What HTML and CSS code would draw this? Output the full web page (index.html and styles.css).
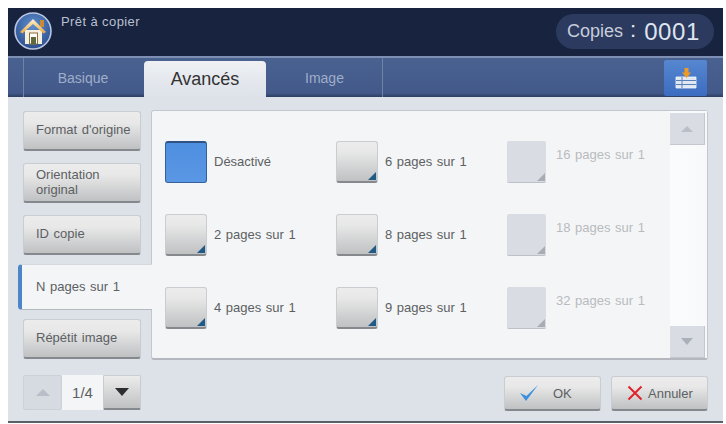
FILE: index.html
```html
<!DOCTYPE html>
<html lang="fr">
<head>
<meta charset="utf-8">
<title>Prêt à copier</title>
<link rel="stylesheet" href="styles.css">
</head>
<body>
<div class="frame">
  <header class="top">
    <div class="home">
      <svg viewBox="0 0 38 38" width="38" height="38">
        <defs>
          <radialGradient id="hb" cx="50%" cy="35%" r="65%"><stop offset="0" stop-color="#5f8fd0"/><stop offset="1" stop-color="#2c4f8f"/></radialGradient>
          <linearGradient id="roof" x1="0" y1="0" x2="0" y2="1"><stop offset="0" stop-color="#fff3cf"/><stop offset="1" stop-color="#e9a743"/></linearGradient>
        </defs>
        <circle cx="19" cy="19" r="18" fill="url(#hb)" stroke="#b9c6e2" stroke-width="1.6"/>
        <rect x="26" y="8" width="4" height="7" fill="#c98a35"/>
        <path d="M11 18h17v14H11z" fill="#f5efdf"/>
        <path d="M6 20 19 7l13 13-2.500 1.500L19 12 8.500 21.500z" fill="url(#roof)"/>
        <rect x="15.500" y="21" width="8" height="11" fill="#fff" stroke="#8a6f3c" stroke-width="1"/>
        <rect x="17" y="25" width="5" height="7" fill="#5f6b3d"/>
      </svg>
    </div>
    <div class="status">Prêt à copier</div>
    <div class="copies"><span class="copies-label">Copies</span><span class="copies-sep">:</span><span class="copies-val">0001</span></div>
  </header>

  <nav class="tabs">
    <div class="tab tab-first">Basique</div>
    <div class="tab tab-active">Avancés</div>
    <div class="tab tab-third">Image</div>
    <div class="tab-rest">
      <button class="tab-icon" aria-label="Options">
        <svg viewBox="0 0 24 26" width="24" height="26">
          <path d="M2 12h20v11H2z" fill="#dfe7f3" stroke="#f4f7fb" stroke-width=".8"/>
          <path d="M2 15.500h20M2 19.500h20M8 12v11" stroke="#5a80b8" stroke-width="1"/>
          <path d="M8 7.500h2.500V3h4v4.500H17L12.500 13z" fill="#ee9a24"/>
        </svg>
      </button>
    </div>
  </nav>

  <main class="body">
    <aside class="side">
      <button class="side-btn">Format d'origine</button>
      <button class="side-btn side-two">Orientation<br>original</button>
      <button class="side-btn">ID copie</button>
      <div class="side-btn side-active">N pages sur 1</div>
      <button class="side-btn">Répétit image</button>
      <div class="pager">
        <span class="pg pg-off"><i class="tri-up"></i></span>
        <span class="pg-num">1/4</span>
        <span class="pg pg-on"><i class="tri-down"></i></span>
      </div>
    </aside>

    <section class="main">
      <div class="panel">
        <div class="grid">
          <div class="opt"><span class="sq sq-sel"></span><span class="lbl">Désactivé</span></div>
          <div class="opt"><span class="sq"></span><span class="lbl">6 pages sur 1</span></div>
          <div class="opt opt-off"><span class="sq sq-off"></span><span class="lbl lbl-off">16 pages sur 1</span></div>
          <div class="opt"><span class="sq"></span><span class="lbl">2 pages sur 1</span></div>
          <div class="opt"><span class="sq"></span><span class="lbl">8 pages sur 1</span></div>
          <div class="opt opt-off"><span class="sq sq-off"></span><span class="lbl lbl-off">18 pages sur 1</span></div>
          <div class="opt"><span class="sq"></span><span class="lbl">4 pages sur 1</span></div>
          <div class="opt"><span class="sq"></span><span class="lbl">9 pages sur 1</span></div>
          <div class="opt opt-off"><span class="sq sq-off"></span><span class="lbl lbl-off">32 pages sur 1</span></div>
        </div>
        <div class="scroll">
          <span class="sc"><i class="tri-up tri-small"></i></span>
          <span class="sc"><i class="tri-down-off"></i></span>
        </div>
      </div>
      <div class="actions">
        <button class="act act-ok">
          <svg viewBox="0 0 20 18" width="20" height="18"><path d="M1 9l6 8L19 1 7.500 12z" fill="#3b8fdc"/></svg>
          <span>OK</span>
        </button>
        <button class="act act-no">
          <svg viewBox="0 0 16 16" width="16" height="16"><path d="M1.500 1.500l13 13M14.500 1.500l-13 13" stroke="#e0232b" stroke-width="2"/></svg>
          <span>Annuler</span>
        </button>
      </div>
    </section>
  </main>
</div>
</body>
</html>
```
FILE: styles.css
```css
* { box-sizing: border-box; }
html, body { margin: 0; padding: 0; background: #fff; }
body { width: 726px; height: 424px; overflow: hidden; font-family: "Liberation Sans", Arial, sans-serif; color: #5c5f63; }
button { font: inherit; color: inherit; padding: 0; margin: 0; }

.frame { margin: 8px 0 0 8px; width: 715px; height: 415px; display: flex; flex-direction: column; background: #dde2e9; border-bottom: 2px solid #5a6068; }

.top { height: 48px; flex: none; display: flex; background: #17233f; padding: 4px 9px 0 6px; position: relative; }
.home { width: 38px; height: 38px; flex: none; }
.status { color: #b9c0cf; font-size: 13px; letter-spacing: .4px; margin: 2px 0 0 9px; flex: 1; }
.copies { width: 158px; height: 35px; margin-top: 2px; border-radius: 18px; background: #2b3a5e; color: #c6cddb; display: flex; align-items: center; padding-left: 11px; }
.copies-label { font-size: 18px; }
.copies-sep { font-size: 22px; margin: -4px 8px 0 7px; color: #e4e8f0; }
.copies-val { font-size: 24px; letter-spacing: .6px; color: #dfe4ee; }

.tabs { height: 41px; flex: none; display: flex; background: linear-gradient(#4a6290, #42598a 90%, #2c3d5e); border-top: 2px solid #7d90b4; }
.tab { color: #9fadc9; font-size: 14px; display: flex; align-items: center; justify-content: center; }
.tab-first { width: 136px; padding-left: 14px; background: linear-gradient(to right, transparent 15px, #6f83a8 15px, #6f83a8 16px, transparent 16px); }
.tab-active { width: 122px; margin-top: 3px; height: 36px; background: linear-gradient(#eef0f3, #dde2e9); color: #333; font-size: 18px; border-radius: 4px 4px 0 0; }
.tab-third { width: 117px; background: linear-gradient(to left, #6f83a8 1px, transparent 1px); }
.tab-rest { flex: 1; display: flex; justify-content: flex-end; padding: 2px 16px 0 0; }
.tab-icon { width: 43px; height: 36px; border: 0; border-radius: 2px; background: linear-gradient(#5687d0, #3c6cc0); display: flex; align-items: center; justify-content: center; }

.body { flex: 1; min-height: 0; display: flex; padding: 13px 15px 0 15px; }
.side { width: 118px; flex: none; display: flex; flex-direction: column; padding-top: 1px; position: relative; z-index: 1; }
.side-btn { height: 40px; margin-bottom: 12px; border: 1px solid #c9ccd0; border-bottom: 2px solid #85888c; border-radius: 3px; background: linear-gradient(#ececec, #e8e8e8 30%, #bfc1c2); font-size: 13px; word-spacing: 1px; text-align: left; padding: 0 0 2px 12px; color: #5c5f63; flex: none; line-height: 16px; }
.side-two { line-height: 15px; }
.side-active { height: 46px; width: 134px; margin: -3px 0 9px -5px; background: #f4f5f6; border: 0; border-left: 4px solid #4d86c8; border-bottom: 1px solid #b5b9bf; border-top: 1px solid #d5d8dc; border-radius: 4px 0 0 4px; padding: 0 0 0 14px; display: flex; align-items: center; }
.side-btn:nth-child(5) { margin-bottom: 16px; }
.pager { height: 35px; display: flex; }
.pg { width: 39px; display: flex; align-items: center; justify-content: center; border-radius: 2px; }
.pg-off { background: #d6dbe2; border: 1px solid #ccd1d8; }
.pg-num { width: 41px; background: #f4f5f6; display: flex; align-items: center; justify-content: center; font-size: 15px; color: #5c5f63; }
.pg-on { width: 38px; background: linear-gradient(#ececec, #bfc1c2); border: 1px solid #c9ccd0; border-bottom: 2px solid #85888c; }
.tri-up { width: 0; height: 0; border: 7px solid transparent; border-top: 0; border-bottom: 7px solid #b9bfc8; display: block; }
.tri-small { border-width: 0 6px 6px; }
.tri-down { width: 0; height: 0; border: 7px solid transparent; border-bottom: 0; border-top: 8px solid #2c2e31; display: block; }
.tri-down-off { width: 0; height: 0; border: 6px solid transparent; border-bottom: 0; border-top: 7px solid #aab1bb; display: block; }

.main { flex: 1; display: flex; flex-direction: column; margin-left: 10px; min-width: 0; }
.panel { width: 557px; height: 250px; flex: none; background: #f4f5f6; border: 1px solid #c4c8ce; border-bottom: 2px solid #b4b8be; border-radius: 3px; display: flex; }
.grid { width: 518px; flex: none; display: grid; grid-template-columns: repeat(3, 171px); grid-auto-rows: 73px; padding: 30px 0 0 13px; }
.opt { display: flex; align-items: flex-start; }
.sq { width: 42px; height: 42px; flex: none; position: relative; border: 1px solid #c9ccd0; border-bottom: 2px solid #85888c; border-radius: 3px; background: linear-gradient(#ececec, #e8e8e8 25%, #bfc1c2); }
.sq::after { content: ""; position: absolute; right: 1px; bottom: 1px; border: 4px solid transparent; border-right-color: #1f5a86; border-bottom-color: #1f5a86; }
.sq-sel { background: linear-gradient(#4f8fe0, #5a97e4); border: 1px solid #34619e; border-top: 2px solid #2f5384; }
.sq-sel::after { display: none; }
.sq-off { width: 39px; background: #d9dde3; border: 0; border-bottom: 1px solid #bdc1c6; border-radius: 2px; }
.sq-off::after { border-right-color: #a9adb3; border-bottom-color: #a9adb3; }
.lbl { font-size: 13px; word-spacing: 1px; margin: 13px 0 0 7px; color: #5c5f63; white-space: nowrap; }
.lbl-off { color: #b8bbc0; margin: 6px 0 0 10px; }
.scroll { flex: 1; display: flex; flex-direction: column; justify-content: space-between; padding: 2px 2px 0 0; background: linear-gradient(to right, #fafbfc, #f8f9fa); }
.sc { height: 32px; background: #d9dde3; border-right: 1px solid #c4c8ce; border-bottom: 1px solid #c4c8ce; display: flex; align-items: center; justify-content: center; }

.actions { display: flex; justify-content: flex-end; gap: 10px; margin-top: 16px; width: 557px; }
.act { width: 97px; height: 35px; border: 1px solid #c9ccd0; border-bottom: 2px solid #85888c; border-radius: 3px; background: linear-gradient(#ececec, #e8e8e8 30%, #bfc1c2); font-size: 13px; display: flex; align-items: center; color: #5c5f63; }
.act-ok { padding-left: 14px; gap: 14px; }
.act-no { padding-left: 15px; gap: 5px; }
```
